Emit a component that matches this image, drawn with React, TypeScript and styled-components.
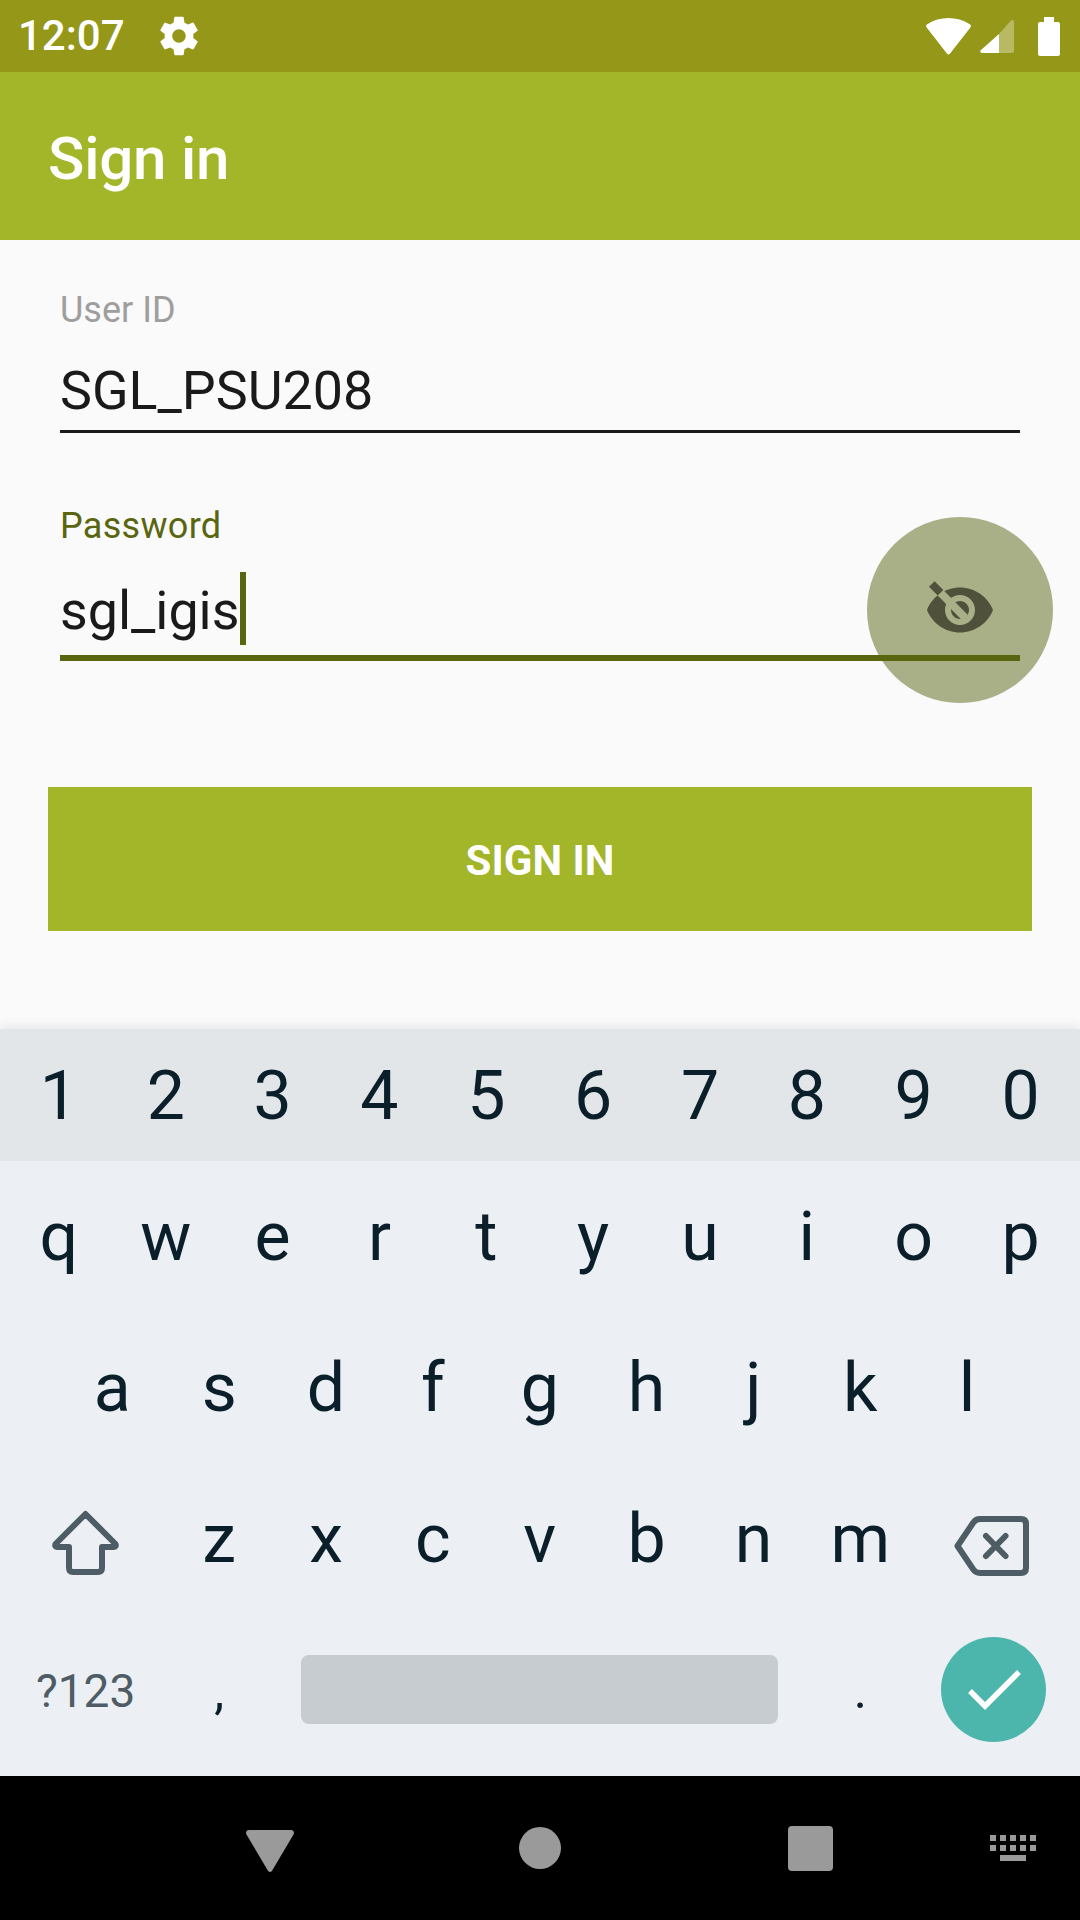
import React from "react";
import styled, { createGlobalStyle } from "styled-components";

const GlobalStyle = createGlobalStyle`
  html, body {
    margin: 0;
    padding: 0;
    background: #fafafa;
    font-family: Roboto, "Liberation Sans", sans-serif;
  }
`;

const Screen = styled.div`
  width: 1080px;
  height: 1920px;
  display: flex;
  flex-direction: column;
  overflow: hidden;
  background: #fafafa;
`;

const StatusBar = styled.div`
  height: 72px;
  flex: none;
  display: flex;
  align-items: center;
  justify-content: space-between;
  padding: 0 20px 0 18px;
  background: #949718;
  color: #fff;
`;

const StatusGroup = styled.div<{ $gap: number }>`
  display: flex;
  align-items: center;
  gap: ${(p) => p.$gap}px;
`;

const StatusSpacer = styled.span`
  width: 6px;
`;

const Clock = styled.span`
  font-size: 42px;
  font-weight: 500;
  line-height: 72px;
`;

const AppBar = styled.header`
  height: 168px;
  box-sizing: border-box;
  flex: none;
  display: flex;
  align-items: center;
  padding: 4px 0 0 48px;
  background: #a3b528;
  color: #fff;
  font-size: 60px;
  font-weight: 500;
  letter-spacing: -0.2px;
`;

const Form = styled.main`
  flex: 1;
  padding: 48px 48px 0;
`;

const Field = styled.div<{ $focused?: boolean }>`
  position: relative;
  margin: ${(p) => (p.$focused ? "71px" : "0")} 12px 0;
`;

const Label = styled.div<{ $focused?: boolean }>`
  font-size: 36px;
  line-height: 44px;
  letter-spacing: ${(p) => (p.$focused ? "0.3px" : "0")};
  color: ${(p) => (p.$focused ? "#5a6510" : "#9e9e9e")};
`;

const Value = styled.div<{ $focused?: boolean }>`
  height: 60px;
  display: flex;
  align-items: center;
  margin-top: ${(p) => (p.$focused ? 33 : 29)}px;
  font-size: 53.8px;
  line-height: 60px;
  color: #1a1a1a;
`;

const Caret = styled.span`
  width: 6px;
  height: 73px;
  flex: none;
  margin: -5px 0 0 1px;
  background: #5a6510;
`;

const Underline = styled.div<{ $focused?: boolean }>`
  position: relative;
  z-index: 1;
  height: ${(p) => (p.$focused ? 6 : 3)}px;
  margin-top: ${(p) => (p.$focused ? 14 : 9)}px;
  background: ${(p) => (p.$focused ? "#5a6510" : "#1a1a1a")};
`;

const Ripple = styled.div`
  position: absolute;
  top: 13px;
  right: -33px;
  width: 186px;
  height: 186px;
  display: flex;
  align-items: center;
  justify-content: center;
  border-radius: 50%;
  background: #a9af86;
`;

const SignInButton = styled.button`
  display: block;
  width: 984px;
  height: 144px;
  margin-top: 126px;
  border: 0;
  padding: 2px 0 0;
  background: #a3b528;
  color: #fff;
  font-family: inherit;
  font-size: 42px;
  font-weight: 700;
`;

const Keyboard = styled.section`
  position: relative;
  flex: none;
  height: 747px;
  background: #eceff3;
  box-shadow: 0 -3px 10px rgba(0, 0, 0, 0.08);
`;

const KeyRow = styled.div<{ $height: number; $shaded?: boolean }>`
  display: grid;
  grid-template-columns: repeat(20, 1fr);
  height: ${(p) => p.$height}px;
  box-sizing: border-box;
  padding: ${(p) => (p.$shaded ? "2px" : "0")} 6px 0 5.5px;
  background: ${(p) => (p.$shaded ? "#e2e6e9" : "transparent")};
`;

const Key = styled.div<{ $span?: number; $small?: boolean; $muted?: boolean }>`
  grid-column: span ${(p) => p.$span ?? 2};
  display: flex;
  align-items: center;
  justify-content: center;
  font-size: ${(p) => (p.$small ? 46 : 68)}px;
  color: ${(p) => (p.$muted ? "#4e5d65" : "#0a1f2a")};
`;

const IconKey = styled(Key)<{ $top: number; $right?: number }>`
  padding: ${(p) => p.$top}px ${(p) => p.$right ?? 0}px 0 0;
`;

const PunctuationKey = styled(Key)`
  font-size: 50px;
  padding-top: 2px;
`;

const ModeKey = styled(Key)`
  padding-top: 2px;
`;

const SpaceBar = styled.div`
  width: 477px;
  height: 69px;
  border-radius: 8px;
  background: #c7ccd0;
`;

const EnterKey = styled.div`
  width: 105px;
  height: 105px;
  display: flex;
  align-items: center;
  justify-content: center;
  border-radius: 50%;
  background: #4db6ac;
`;

const NavBar = styled.nav`
  flex: none;
  height: 144px;
  display: grid;
  grid-template-columns: 270px 270px 270px 135px;
  padding-left: 135px;
  align-items: center;
  justify-items: center;
  background: #000;
`;

const BackSvg = styled.svg`
  margin-top: 6px;
`;

const Eye = () => (
  <svg width="72" height="72" viewBox="0 0 24 24">
    <path
      fill="#4f513b"
      fillRule="evenodd"
      d="M12 4.5C7 4.5 2.73 7.61 1 12c1.73 4.39 6 7.5 11 7.5s9.27-3.11 11-7.5c-1.73-4.39-6-7.5-11-7.5zM12 17c-2.76 0-5-2.24-5-5s2.24-5 5-5 5 2.24 5 5-2.24 5-5 5zm0-8c-1.66 0-3 1.34-3 3s1.34 3 3 3 3-1.34 3-3-1.34-3-3-3z"
    />
    <path d="M2.6 3.3 5.6 6.350" stroke="#4f513b" strokeWidth="2.600" fill="none" />
    <path d="M5.500 6.250 13.700 14.600" stroke="#a9af86" strokeWidth="2.600" fill="none" />
  </svg>
);

const Gear = () => (
  <svg width="46" height="46" viewBox="0 0 24 24" fill="#fff">
    <path d="M19.43 12.98c.04-.32.07-.64.07-.98s-.03-.66-.07-.98l2.11-1.65c.19-.15.24-.42.12-.64l-2-3.46c-.12-.22-.39-.3-.61-.22l-2.49 1c-.52-.4-1.08-.73-1.69-.98l-.38-2.65C14.46 2.18 14.25 2 14 2h-4c-.25 0-.46.18-.49.42l-.38 2.65c-.61.25-1.17.59-1.69.98l-2.49-1c-.23-.09-.49 0-.61.22l-2 3.46c-.13.22-.07.49.12.64l2.11 1.65c-.04.32-.07.65-.07.98s.03.66.07.98l-2.11 1.65c-.19.15-.24.42-.12.64l2 3.46c.12.22.39.3.61.22l2.49-1c.52.4 1.08.73 1.69.98l.38 2.65c.03.24.24.42.49.42h4c.25 0 .46-.18.49-.42l.38-2.65c.61-.25 1.17-.59 1.69-.98l2.49 1c.23.09.49 0 .61-.22l2-3.46c.12-.22.07-.49-.12-.64l-2.11-1.65zM12 15.5c-1.93 0-3.5-1.57-3.5-3.5s1.57-3.5 3.5-3.5 3.5 1.57 3.5 3.5-1.57 3.5-3.5 3.5z" />
  </svg>
);

const Wifi = () => (
  <svg width="45" height="37" viewBox="0 0 45 37" fill="#fff">
    <path d="M22.5 36.6c-.6 0-1-.3-1.4-.8L.8 9.8C-.3 8.500 0 7 1.200 6.200 7.500 2.200 14.800 0 22.500 0s15 2.200 21.300 6.200c1.200.8 1.500 2.300.4 3.600L23.900 35.800c-.4.5-.8.8-1.400.8z" />
  </svg>
);

const Cell = () => (
  <svg width="34" height="34" viewBox="0 0 34 34">
    <path fill="#b7ba62" d="M19 15 31 1.500c1-1 3-.8 3 1V32c0 1-1 2-2 2H19z" />
    <path fill="#fff" d="M19 15v19H2c-1.500 0-2.500-1.600-1.300-2.800z" />
  </svg>
);

const Battery = () => (
  <svg width="22" height="39" viewBox="0 0 22 39" fill="#fff">
    <path d="M6 0h10v5h4c1.100 0 2 .9 2 2v30c0 1.100-.9 2-2 2H2c-1.100 0-2-.9-2-2V7c0-1.100.9-2 2-2h4z" />
  </svg>
);

const ShiftIcon = () => (
  <svg width="67" height="65" viewBox="0 0 67 65" fill="none" stroke="#4e5d65" strokeWidth="6" strokeLinejoin="round">
    <path d="M33.500 4 3.500 34Q2.500 37 5 37H17V58Q17 62 21 62H46Q50 62 50 58V37H62Q64.500 37 63.500 34Z" />
  </svg>
);

const BackspaceIcon = () => (
  <svg width="75" height="60" viewBox="0 0 75 60" fill="none" stroke="#4e5d65" strokeWidth="6" strokeLinejoin="round" strokeLinecap="round">
    <path d="M3.500 30 19 7Q21.500 3 26 3H67Q72 3 72 8V52Q72 57 67 57H26Q21.500 57 19 53Z" />
    <path d="M32 20 51.500 40M51.500 20 32 40" />
  </svg>
);

const CheckIcon = () => (
  <svg width="54" height="42" viewBox="0 0 54 42" fill="none" stroke="#fff" strokeWidth="5.500">
    <path d="M3 22 18 37 52 3" />
  </svg>
);

const BackIcon = () => (
  <BackSvg width="48" height="42" viewBox="0 0 48 42" fill="#9a9a9a">
    <path d="M3 0h42c2 0 3.500 1.800 2.800 4L26.500 40c-1 2.600-4 2.600-5 0L.2 4C-.5 1.800 1 0 3 0z" />
  </BackSvg>
);

const HomeIcon = () => (
  <svg width="42" height="42" viewBox="0 0 42 42" fill="#9a9a9a">
    <circle cx="21" cy="21" r="21" />
  </svg>
);

const RecentsIcon = () => (
  <svg width="45" height="45" viewBox="0 0 45 45" fill="#9a9a9a">
    <rect width="45" height="45" rx="4" />
  </svg>
);

const KeyboardHideIcon = () => (
  <svg width="46" height="26" viewBox="0 0 46 26" fill="#9a9a9a">
    {[0, 10, 20, 30, 40].map((x) => (
      <React.Fragment key={x}>
        <rect x={x} y="0" width="6" height="6" />
        <rect x={x} y="10" width="6" height="6" />
      </React.Fragment>
    ))}
    <rect x="10" y="20" width="26" height="6" />
  </svg>
);

const digits = "1234567890".split("");
const topRow = "qwertyuiop".split("");
const homeRow = "asdfghjkl".split("");
const bottomRow = "zxcvbnm".split("");

export default function App() {
  return (
    <Screen>
      <GlobalStyle />
      <StatusBar>
        <StatusGroup $gap={31}>
          <Clock>12:07</Clock>
          <Gear />
        </StatusGroup>
        <StatusGroup $gap={9}>
          <Wifi />
          <Cell />
          <StatusSpacer />
          <Battery />
        </StatusGroup>
      </StatusBar>
      <AppBar>Sign in</AppBar>
      <Form>
        <Field>
          <Label>User ID</Label>
          <Value>SGL_PSU208</Value>
          <Underline />
        </Field>
        <Field $focused>
          <Ripple>
            <Eye />
          </Ripple>
          <Label $focused>Password</Label>
          <Value $focused>
            sgl_igis
            <Caret />
          </Value>
          <Underline $focused />
        </Field>
        <SignInButton>SIGN IN</SignInButton>
      </Form>
      <Keyboard>
        <KeyRow $height={132} $shaded>
          {digits.map((k) => (
            <Key key={k}>{k}</Key>
          ))}
        </KeyRow>
        <KeyRow $height={151}>
          {topRow.map((k) => (
            <Key key={k}>{k}</Key>
          ))}
        </KeyRow>
        <KeyRow $height={152}>
          <Key $span={1} />
          {homeRow.map((k) => (
            <Key key={k}>{k}</Key>
          ))}
          <Key $span={1} />
        </KeyRow>
        <KeyRow $height={150}>
          <IconKey $span={3} $top={6}>
            <ShiftIcon />
          </IconKey>
          {bottomRow.map((k) => (
            <Key key={k}>{k}</Key>
          ))}
          <IconKey $span={3} $top={13} $right={5}>
            <BackspaceIcon />
          </IconKey>
        </KeyRow>
        <KeyRow $height={151}>
          <ModeKey $span={3} $small $muted>
            ?123
          </ModeKey>
          <PunctuationKey>,</PunctuationKey>
          <Key $span={10}>
            <SpaceBar />
          </Key>
          <PunctuationKey>.</PunctuationKey>
          <Key $span={3}>
            <EnterKey>
              <CheckIcon />
            </EnterKey>
          </Key>
        </KeyRow>
      </Keyboard>
      <NavBar>
        <BackIcon />
        <HomeIcon />
        <RecentsIcon />
        <KeyboardHideIcon />
      </NavBar>
    </Screen>
  );
}
